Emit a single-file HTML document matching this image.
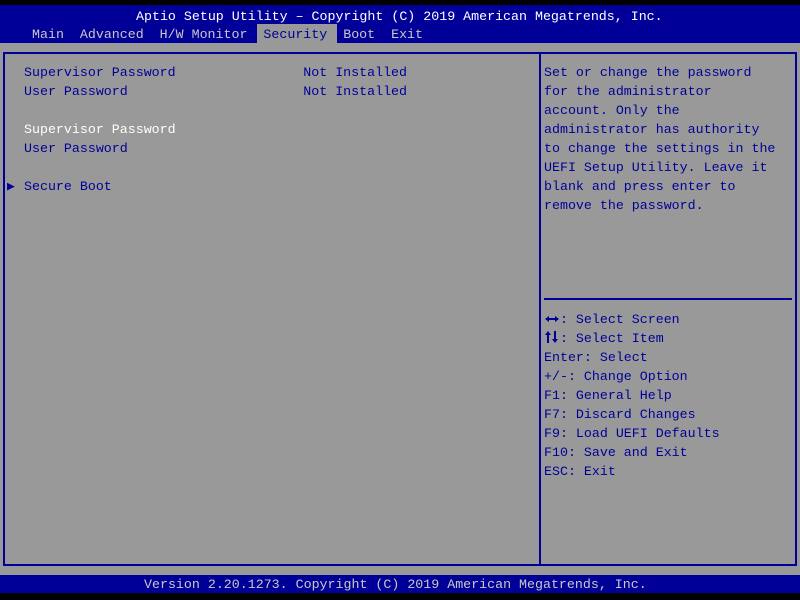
<!DOCTYPE html>
<html><head><style>
*{margin:0;padding:0}
body{width:800px;height:600px;background:#999;position:relative;overflow:hidden;font-family:"Liberation Mono","DejaVu Sans Mono",monospace;font-size:13.3px;line-height:19px}
.a{position:absolute;white-space:pre}
.blue{color:#000098}
.wh{color:#fff}
.lg{color:#c8c8c8}
</style></head><body>
<div class="a" style="left:0;top:0;width:800px;height:5px;background:#000"></div>
<div class="a" style="left:0;top:5px;width:800px;height:38px;background:#000098"></div>
<div class="a wh" style="left:136px;top:7px">Aptio Setup Utility – Copyright (C) 2019 American Megatrends, Inc.</div>
<div class="a" style="left:257px;top:24px;width:80px;height:19px;background:#999"></div>
<div class="a lg" style="left:32px;top:25px">Main  Advanced  H/W Monitor  <span class="blue">Security</span>  Boot  Exit</div>
<div class="a" style="left:3px;top:52px;width:790px;height:510px;border:2px solid #000098"></div>
<div class="a" style="left:539px;top:52px;width:2px;height:514px;background:#000098"></div>
<div class="a" style="left:544px;top:298px;width:248px;height:2px;background:#000098"></div>
<div class="a blue" style="left:24px;top:63px">Supervisor Password                Not Installed
User Password                      Not Installed</div>
<div class="a wh" style="left:24px;top:120px">Supervisor Password</div>
<div class="a blue" style="left:24px;top:139px">User Password</div>
<div class="a blue" style="left:7px;top:177px;font-size:13px">▶</div>
<div class="a blue" style="left:24px;top:177px">Secure Boot</div>
<div class="a blue" style="left:544px;top:63px">Set or change the password
for the administrator
account. Only the
administrator has authority
to change the settings in the
UEFI Setup Utility. Leave it
blank and press enter to
remove the password.</div>
<svg class="a" style="left:544px;top:312px" width="16" height="32" viewBox="0 0 16 32" fill="#000098" stroke="#000098" stroke-width="2">
<line x1="2" y1="7" x2="14" y2="7"/>
<polygon points="1,7 5,4 5,10" stroke="none"/>
<polygon points="15,7 11,4 11,10" stroke="none"/>
<line x1="4" y1="21" x2="4" y2="31"/>
<polygon points="4,19 1,23 7,23" stroke="none"/>
<line x1="11" y1="19" x2="11" y2="29"/>
<polygon points="11,31 8,27 14,27" stroke="none"/>
</svg>
<div class="a blue" style="left:544px;top:310px">  : Select Screen
  : Select Item
Enter: Select
+/-: Change Option
F1: General Help
F7: Discard Changes
F9: Load UEFI Defaults
F10: Save and Exit
ESC: Exit</div>
<div class="a" style="left:0;top:575px;width:800px;height:18px;background:#000098"></div>
<div class="a" style="left:0;top:593px;width:800px;height:7px;background:#000"></div>
<div class="a lg" style="left:144px;top:575px;line-height:19px">Version 2.20.1273. Copyright (C) 2019 American Megatrends, Inc.</div>
</body></html>
